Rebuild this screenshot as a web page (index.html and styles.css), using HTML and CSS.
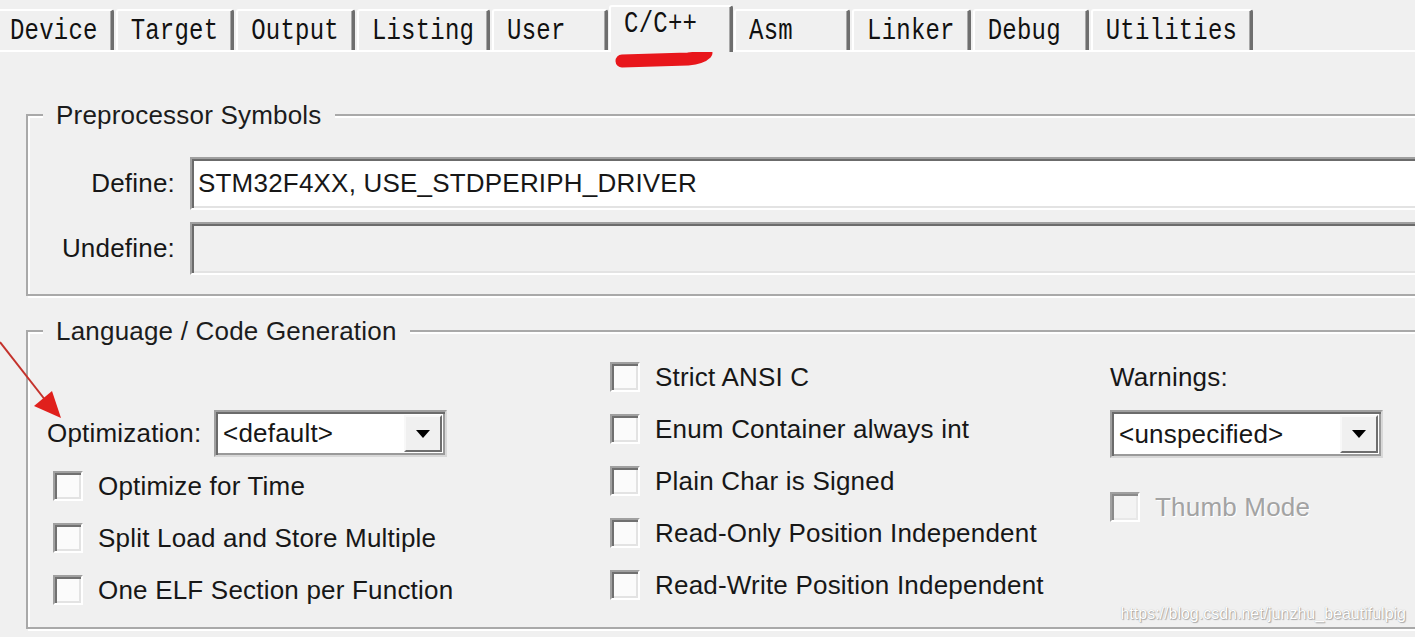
FILE: index.html
```html
<!DOCTYPE html>
<html>
<head>
<meta charset="utf-8">
<title>Options for Target - C/C++</title>
<link rel="stylesheet" href="styles.css">
</head>
<body>
<div class="dialog">
  <div class="tabbar">
    <div class="tab"><span class="tab-label">Device</span></div>
    <div class="tab"><span class="tab-label">Target</span></div>
    <div class="tab"><span class="tab-label">Output</span></div>
    <div class="tab"><span class="tab-label">Listing</span></div>
    <div class="tab"><span class="tab-label">User</span></div>
    <div class="tab active"><span class="tab-label">C/C++</span></div>
    <div class="tab"><span class="tab-label">Asm</span></div>
    <div class="tab"><span class="tab-label">Linker</span></div>
    <div class="tab"><span class="tab-label">Debug</span></div>
    <div class="tab"><span class="tab-label">Utilities</span></div>
  </div>

  <div class="panel">
    <fieldset class="group group-pre">
      <legend>Preprocessor Symbols</legend>
      <div class="pre-body">
        <div class="field-row">
          <span class="field-label">Define:</span>
          <div class="textbox">STM32F4XX, USE_STDPERIPH_DRIVER</div>
        </div>
        <div class="field-row">
          <span class="field-label">Undefine:</span>
          <div class="textbox disabled"></div>
        </div>
      </div>
    </fieldset>

    <fieldset class="group group-lang">
      <legend>Language / Code Generation</legend>
      <div class="lang-grid">
        <div class="col col-opt">
          <div class="opt-row">
            <span class="opt-label">Optimization:</span>
            <div class="combo combo-opt">
              <span class="combo-text">&lt;default&gt;</span>
              <span class="combo-btn"><span class="arrow"></span></span>
            </div>
          </div>
          <div class="check"><span class="box"></span><span class="check-text">Optimize for Time</span></div>
          <div class="check"><span class="box"></span><span class="check-text">Split Load and Store Multiple</span></div>
          <div class="check"><span class="box"></span><span class="check-text">One ELF Section per Function</span></div>
        </div>
        <div class="col col-mid">
          <div class="check"><span class="box"></span><span class="check-text">Strict ANSI C</span></div>
          <div class="check"><span class="box"></span><span class="check-text">Enum Container always int</span></div>
          <div class="check"><span class="box"></span><span class="check-text">Plain Char is Signed</span></div>
          <div class="check"><span class="box"></span><span class="check-text">Read-Only Position Independent</span></div>
          <div class="check"><span class="box"></span><span class="check-text">Read-Write Position Independent</span></div>
        </div>
        <div class="col col-warn">
          <div class="warn-label">Warnings:</div>
          <div class="combo combo-warn">
            <span class="combo-text">&lt;unspecified&gt;</span>
            <span class="combo-btn"><span class="arrow"></span></span>
          </div>
          <div class="check check-disabled"><span class="box"></span><span class="check-text">Thumb Mode</span></div>
        </div>
      </div>
    </fieldset>
  </div>

  <svg class="marks" width="1415" height="637" viewBox="0 0 1415 637">
    <path d="M622 61 L688 59 Q701 58 706 53" fill="none" stroke="#e8161b" stroke-width="13" stroke-linecap="round" stroke-linejoin="round"/>
    <line x1="0" y1="342" x2="46" y2="401" stroke="#c4322c" stroke-width="2"/>
    <polygon points="61,418 34,406 52,391" fill="#e0201c"/>
  </svg>

  <div class="watermark">https://blog.csdn.net/junzhu_beautifulpig</div>
</div>
</body>
</html>
```

FILE: styles.css
```css
* {
  box-sizing: border-box;
}

html, body {
  margin: 0;
  padding: 0;
}

body {
  width: 1415px;
  height: 637px;
  overflow: hidden;
  background: #f0f0f0;
  font-family: "Liberation Sans", Arial, sans-serif;
  font-size: 26px;
  letter-spacing: 0.2px;
  color: #171717;
}

.dialog {
  position: relative;
  width: 1415px;
  height: 637px;
  overflow: hidden;
}

/* ---------- tabs ---------- */
.tabbar {
  display: flex;
  align-items: flex-end;
  gap: 2px;
  height: 52px;
  margin-left: -5px;
  border-bottom: 2px solid #ffffff;
}

.tab {
  display: flex;
  align-items: center;
  height: 41px;
  min-width: 116px;
  padding: 0 13px;
  border-top: 2px solid #ffffff;
  border-left: 2px solid #ffffff;
  border-right: 3px solid #6e6e6e;
  box-shadow: inset -1px 0 0 #a8a8a8;
  border-radius: 3px 3px 0 0;
  background: #f0f0f0;
  font-family: "Liberation Mono", "Courier New", monospace;
  font-size: 24px;
  letter-spacing: 0.2px;
  color: #111111;
}

.tab-label {
  display: inline-block;
  transform: scaleY(1.25);
}

.tab.active {
  position: relative;
  z-index: 1;
  height: 47px;
  min-width: 124px;
  margin: 0 -1px -2px -1px;
  padding-bottom: 13px;
}

/* ---------- group boxes ---------- */
.group {
  margin: 0 -80px 0 26px;
  padding: 0;
  min-width: 0;
  border: 2px solid #a9a9a9;
  box-shadow: inset 2px 2px 0 #ffffff, 2px 2px 0 #ffffff;
}

.group legend {
  margin-left: 15px;
  padding: 0 13px;
  line-height: 28px;
  background: #f0f0f0;
  color: #1c1c1c;
}

.group-pre {
  margin-top: 49px;
}

.group-lang {
  margin-top: 21px;
}

.pre-body {
  display: flex;
  flex-direction: column;
  gap: 12px;
  padding: 28px 0 19px 0;
}

.field-row {
  display: flex;
  align-items: center;
  height: 53px;
}

.field-label {
  width: 147px;
  margin-right: 15px;
  text-align: right;
}

.textbox {
  flex: 1;
  height: 53px;
  display: flex;
  align-items: center;
  padding-left: 6px;
  background: #ffffff;
  border: 2px solid;
  border-color: #a0a0a0 #ffffff #ffffff #a0a0a0;
  box-shadow: inset 2px 2px 0 #6b6b6b, inset -2px -2px 0 #e3e3e3;
  white-space: nowrap;
}

.textbox.disabled {
  background: #f0f0f0;
}

/* ---------- language grid ---------- */
.lang-grid {
  display: grid;
  grid-template-columns: 563px 500px 1fr;
  padding: 6px 0 11px 19px;
}

.col {
  display: flex;
  flex-direction: column;
}

.opt-row {
  display: flex;
  align-items: center;
  height: 47px;
  margin-top: 59px;
  margin-bottom: 3px;
}

.opt-label {
  width: 167px;
}

.col-opt .check {
  padding-left: 6px;
}

.check {
  display: flex;
  align-items: center;
  height: 52px;
  white-space: nowrap;
}

.box {
  flex: none;
  width: 30px;
  height: 30px;
  margin-right: 15px;
  background: #fbfbfb;
  border: 2px solid;
  border-color: #a0a0a0 #ffffff #ffffff #a0a0a0;
  box-shadow: inset 2px 2px 0 #707070, inset -2px -2px 0 #e3e3e3;
}

.check-disabled .box {
  background: #f3f3f3;
  box-shadow: inset 2px 2px 0 #8a8a8a, inset -2px -2px 0 #e8e8e8;
}

.check-disabled .check-text {
  color: #a3a3a3;
  text-shadow: 1px 1px 0 #ffffff;
}

.warn-label {
  display: flex;
  align-items: center;
  height: 52px;
}

/* ---------- combo boxes ---------- */
.combo {
  display: flex;
  align-items: stretch;
  background: #ffffff;
  border: 2px solid;
  border-color: #a0a0a0 #d8d8d8 #d8d8d8 #a0a0a0;
  box-shadow: inset 2px 2px 0 #6b6b6b, inset -2px -2px 0 #9a9a9a;
  padding: 3px 3px 3px 2px;
}

.combo-opt {
  width: 233px;
  height: 47px;
}

.combo-warn {
  width: 273px;
  height: 48px;
  margin-top: 7px;
  margin-bottom: 23px;
}

.combo-text {
  flex: 1;
  display: flex;
  align-items: center;
  padding-left: 5px;
  white-space: nowrap;
}

.combo-btn {
  flex: none;
  width: 38px;
  display: flex;
  align-items: center;
  justify-content: center;
  background: #f0f0f0;
  border: 2px solid;
  border-color: #f8f8f8 #6e6e6e #6e6e6e #f8f8f8;
}

.arrow {
  width: 0;
  height: 0;
  border-left: 7px solid transparent;
  border-right: 7px solid transparent;
  border-top: 8px solid #000000;
}

/* ---------- overlays ---------- */
.marks {
  position: absolute;
  top: 0;
  left: 0;
  pointer-events: none;
}

.watermark {
  position: absolute;
  top: 605px;
  right: 9px;
  font-size: 16px;
  line-height: 18px;
  letter-spacing: 0;
  color: #ffffff;
  text-shadow: 1px 1px 1px rgba(0, 0, 0, 0.28), 0 0 1px rgba(0, 0, 0, 0.3);
  white-space: nowrap;
}
```
